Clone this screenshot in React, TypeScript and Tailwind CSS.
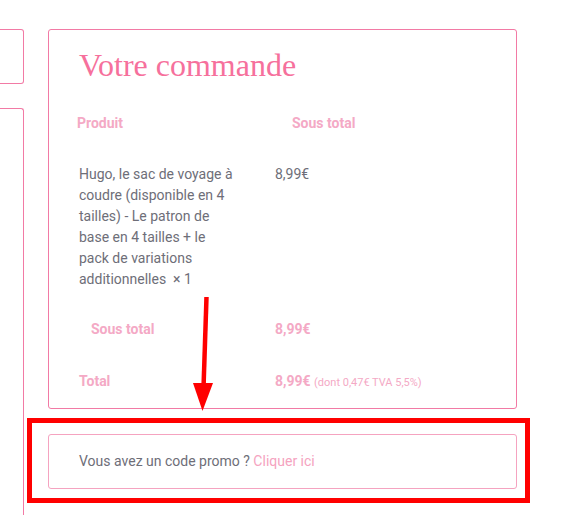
import React from 'react';

const pink = 'border-[#f27aa5]';

export default function App() {
  return (
    <div className="relative w-[567px] h-[515px] overflow-hidden bg-white font-['Roboto',sans-serif]">
      <div className="flex h-full">
        {/* left column (cut off) */}
        <div className="w-[24px] flex flex-col pt-[29px]">
          <div className={`h-[55px] border-y border-r ${pink} rounded-r-[3px]`} />
          <div className={`mt-[24px] flex-1 border-t border-r ${pink} rounded-tr-[3px]`} />
        </div>

        {/* order column */}
        <div className="ml-[24px] w-[469px] pt-[29px] flex flex-col">
          <div className={`h-[380px] border ${pink} rounded-[3px] px-[30px] pt-[15px]`}>
            <h2 className="font-['Liberation_Serif',serif] text-[32px] leading-[40px] text-[#f6709c]">
              Votre commande
            </h2>

            <div className="mt-[25px] text-[14px] font-bold text-[#f4a9c5] flex h-[26px] items-center">
              <div className="w-[215px] -ml-[2px]">Produit</div>
              <div>Sous total</div>
            </div>

            <div className="mt-[28px] flex text-[14px] leading-[21px] text-[#6e6e78]">
              <div className="w-[156px] mr-[40px]">
                Hugo, le sac de voyage à coudre (disponible en 4 tailles) - Le patron de base en 4 tailles + le pack de variations additionnelles&nbsp; × 1
              </div>
              <div>8,99€</div>
            </div>

            <div className="mt-[26px] flex h-[26px] items-center text-[14px] font-bold text-[#f4a9c5]">
              <div className="w-[196px] pl-[12px]">Sous total</div>
              <div>8,99€</div>
            </div>

            <div className="mt-[26px] flex h-[26px] items-center text-[14px] font-bold text-[#f4a9c5]">
              <div className="w-[196px]">Total</div>
              <div>
                8,99€ <span className="font-normal text-[11px]">(dont 0,47€ TVA 5,5%)</span>
              </div>
            </div>
          </div>

          <div className="mt-[25px] h-[55px] border border-[#f5a3c0] rounded-[3px] pl-[30px] flex items-center text-[14px] text-[#6e6e78]">
            Vous avez un code promo ?&nbsp;<span className="text-[#f5a3c0]">Cliquer ici</span>
          </div>
        </div>
      </div>

      {/* annotation overlay */}
      <div className="absolute left-[27px] top-[418px] w-[503px] h-[85px] border-[5px] border-[#ff0000]" />
      <svg className="absolute left-0 top-0" width="567" height="515" viewBox="0 0 567 515">
        <line x1="206.5" y1="297" x2="203.5" y2="388" stroke="#ff0000" strokeWidth="4.5" />
        <polygon points="193,383 213,383 202.5,411" fill="#ff0000" />
      </svg>
    </div>
  );
}
